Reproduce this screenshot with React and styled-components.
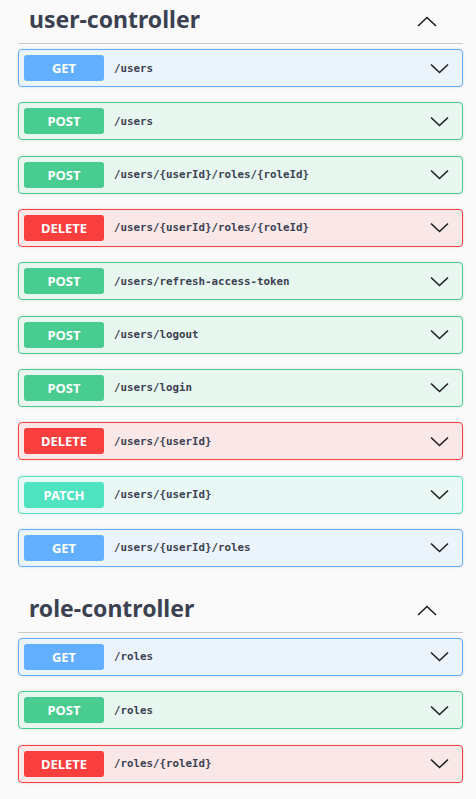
import React from 'react'
import styled, { createGlobalStyle } from 'styled-components'

const Global = createGlobalStyle`
  html, body {
    margin: 0;
    padding: 0;
    background: #fafafa;
  }
  body {
    font-family: "Noto Sans", sans-serif;
    color: #3b4151;
  }
`

const methods = {
  get: { color: '#61affe', bg: '#ebf3fb' },
  post: { color: '#49cc90', bg: '#e8f6f0' },
  delete: { color: '#f93e3e', bg: '#fae7e7' },
  patch: { color: '#50e3c2', bg: '#e9f8f5' }
}

const Page = styled.div`
  min-height: 798px;
  box-sizing: border-box;
  border-bottom: 1px solid #6b6b6b;
  padding: 0 13px 0 18px;
`

// last block margin collapses into this one
const Section = styled.section`
  margin-bottom: 22px;
`

const TagHeader = styled.div`
  height: 44px;
  box-sizing: border-box;
  display: flex;
  align-items: center;
  justify-content: space-between;
  padding: 0 26px 0 11px;
  border-bottom: 1px solid #c9c9c9;
  margin-bottom: 5px;
`

const TagTitle = styled.h3`
  margin: 0;
  font-family: "Noto Sans", sans-serif;
  font-weight: 700;
  font-size: 23px;
  line-height: 1;
  color: #3b4151;
  position: relative;
  top: -2px;
`

const Chevron = styled.svg`
  display: block;
  flex-shrink: 0;
`

const Block = styled.div`
  height: 38px;
  box-sizing: border-box;
  display: flex;
  align-items: center;
  padding: 0 13px 0 5px;
  margin-bottom: 15.33px;
  border: 1px solid ${p => methods[p.$method].color};
  background: ${p => methods[p.$method].bg};
  border-radius: 4px;
  box-shadow: 0 0 3px rgba(0, 0, 0, 0.12);
`

const Badge = styled.span`
  width: 80px;
  height: 26px;
  border-radius: 3px;
  display: flex;
  align-items: center;
  justify-content: center;
  background: ${p => methods[p.$method].color};
  color: #fff;
  font-family: "Noto Sans", sans-serif;
  font-weight: 700;
  font-size: 13px;
  text-transform: uppercase;
  flex-shrink: 0;
`

const Path = styled.span`
  flex: 1;
  padding-left: 10px;
  font-family: "DejaVu Sans Mono", "Liberation Mono", monospace;
  font-weight: 700;
  font-size: 10.8px;
  color: #3b4151;
`

const Up = () => (
  <Chevron width="20" height="11" viewBox="0 0 20 11">
    <path d="M1 10 L10 1.5 L19 10" fill="none" stroke="#1f1f1f" strokeWidth="1.6" />
  </Chevron>
)

const Down = () => (
  <Chevron width="19" height="11" viewBox="0 0 19 11">
    <path d="M1 1.5 L9.5 9.5 L18 1.5" fill="none" stroke="#1f1f1f" strokeWidth="1.6" />
  </Chevron>
)

const tags = [
  {
    name: 'user-controller',
    ops: [
      ['get', '/users'],
      ['post', '/users'],
      ['post', '/users/{userId}/roles/{roleId}'],
      ['delete', '/users/{userId}/roles/{roleId}'],
      ['post', '/users/refresh-access-token'],
      ['post', '/users/logout'],
      ['post', '/users/login'],
      ['delete', '/users/{userId}'],
      ['patch', '/users/{userId}'],
      ['get', '/users/{userId}/roles']
    ]
  },
  {
    name: 'role-controller',
    ops: [
      ['get', '/roles'],
      ['post', '/roles'],
      ['delete', '/roles/{roleId}']
    ]
  }
]

export default function App() {
  return (
    <Page>
      <Global />
      {tags.map(tag => (
        <Section key={tag.name}>
          <TagHeader>
            <TagTitle>{tag.name}</TagTitle>
            <Up />
          </TagHeader>
          {tag.ops.map(([method, path], i) => (
            <Block key={i} $method={method}>
              <Badge $method={method}>{method}</Badge>
              <Path>{path}</Path>
              <Down />
            </Block>
          ))}
        </Section>
      ))}
    </Page>
  )
}
